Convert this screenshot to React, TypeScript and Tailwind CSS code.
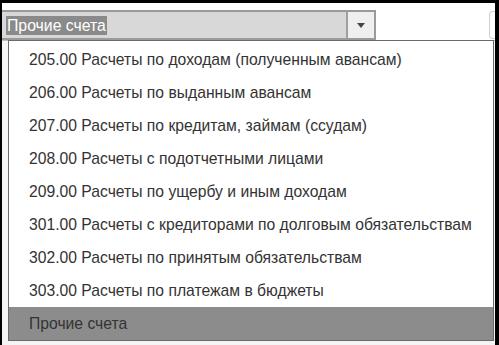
import React from "react";

const items = [
  "205.00 Расчеты по доходам (полученным авансам)",
  "206.00 Расчеты по выданным авансам",
  "207.00 Расчеты по кредитам, займам (ссудам)",
  "208.00 Расчеты с подотчетными лицами",
  "209.00 Расчеты по ущербу и иным доходам",
  "301.00 Расчеты с кредиторами по долговым обязательствам",
  "302.00 Расчеты по принятым обязательствам",
  "303.00 Расчеты по платежам в бюджеты",
  "Прочие счета",
];

const font = { fontFamily: '"Liberation Sans", Arial, sans-serif' };

export default function App() {
  return (
    <div
      className="relative w-[499px] h-[345px] overflow-hidden bg-black pt-[3px] pl-[2px] pr-[4px] pb-[2px]"
      style={font}
    >
      <div className="relative h-full bg-white">
        {/* combo row */}
        <div className="flex items-start pt-[7px] border-b border-[#bdbdbd] h-[38px]">
          <div className="flex h-[30px] w-[374px] border-2 border-l-0 border-[#9a9a9a] bg-[#d8d8d8]">
            <div className="flex flex-1 items-center pl-[4px]">
              <span className="bg-[#8a8a8a] px-[1px] text-[15.8px] leading-[19px] text-white">
                Прочие счета
              </span>
            </div>
            <div className="flex w-[28px] items-center justify-center border-l-2 border-[#a0a0a0] bg-[#efefef]">
              <svg width="8" height="5" viewBox="0 0 8 5">
                <path d="M0 0h8L4 5z" fill="#444" />
              </svg>
            </div>
          </div>
          <div className="flex-1" />
          <div className="mt-[1px] h-[28px] w-[6px] rounded-l-[4px] border border-r-0 border-[#d0d0d0]" />
        </div>
        <div className="h-full bg-[#f4f4f4]" />

        {/* dropdown */}
        <div className="absolute left-[6px] right-[1px] top-[37px] bottom-[2px] border border-[#6a6a6a] bg-white pt-[2px]">
          {items.map((t, i) => (
            <div
              key={t}
              className={
                "flex h-[33px] items-center pl-[20px] text-[15.7px] text-[#333333] " +
                (i === items.length - 1 ? "bg-[#8c8c8c]" : "")
              }
            >
              {t}
            </div>
          ))}
        </div>
      </div>
    </div>
  );
}
